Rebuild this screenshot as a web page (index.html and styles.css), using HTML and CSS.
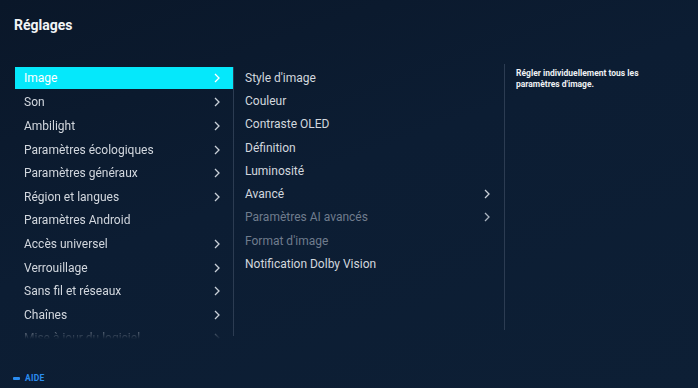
FILE: index.html
```html
<!DOCTYPE html>
<html lang="fr">
<head>
    <meta charset="UTF-8">
    <title>Réglages</title>
    <link rel="stylesheet" href="styles.css">
</head>
<body>

<div class="screen">
    <h1 class="title">Réglages</h1>

    <div class="panels">
        <ul class="menu main-menu">
            <li class="item active"><span>Image</span><svg class="chev" viewBox="0 0 6 10"><polyline points="1,1 5,5 1,9"/></svg></li>
            <li class="item"><span>Son</span><svg class="chev" viewBox="0 0 6 10"><polyline points="1,1 5,5 1,9"/></svg></li>
            <li class="item"><span>Ambilight</span><svg class="chev" viewBox="0 0 6 10"><polyline points="1,1 5,5 1,9"/></svg></li>
            <li class="item"><span>Paramètres écologiques</span><svg class="chev" viewBox="0 0 6 10"><polyline points="1,1 5,5 1,9"/></svg></li>
            <li class="item"><span>Paramètres généraux</span><svg class="chev" viewBox="0 0 6 10"><polyline points="1,1 5,5 1,9"/></svg></li>
            <li class="item"><span>Région et langues</span><svg class="chev" viewBox="0 0 6 10"><polyline points="1,1 5,5 1,9"/></svg></li>
            <li class="item"><span>Paramètres Android</span></li>
            <li class="item"><span>Accès universel</span><svg class="chev" viewBox="0 0 6 10"><polyline points="1,1 5,5 1,9"/></svg></li>
            <li class="item"><span>Verrouillage</span><svg class="chev" viewBox="0 0 6 10"><polyline points="1,1 5,5 1,9"/></svg></li>
            <li class="item"><span>Sans fil et réseaux</span><svg class="chev" viewBox="0 0 6 10"><polyline points="1,1 5,5 1,9"/></svg></li>
            <li class="item"><span>Chaînes</span><svg class="chev" viewBox="0 0 6 10"><polyline points="1,1 5,5 1,9"/></svg></li>
            <li class="item"><span>Mise à jour du logiciel</span><svg class="chev" viewBox="0 0 6 10"><polyline points="1,1 5,5 1,9"/></svg></li>
        </ul>

        <ul class="menu sub-menu">
            <li class="item"><span>Style d'image</span></li>
            <li class="item"><span>Couleur</span></li>
            <li class="item"><span>Contraste OLED</span></li>
            <li class="item"><span>Définition</span></li>
            <li class="item"><span>Luminosité</span></li>
            <li class="item"><span>Avancé</span><svg class="chev" viewBox="0 0 6 10"><polyline points="1,1 5,5 1,9"/></svg></li>
            <li class="item disabled"><span>Paramètres AI avancés</span><svg class="chev" viewBox="0 0 6 10"><polyline points="1,1 5,5 1,9"/></svg></li>
            <li class="item disabled"><span>Format d'image</span></li>
            <li class="item"><span>Notification Dolby Vision</span></li>
        </ul>

        <div class="help-text">
            Régler individuellement tous les paramètres d'image.
        </div>
    </div>

    <div class="footer">
        <span class="key-dash"></span>
        <span class="key-label">AIDE</span>
    </div>
</div>

</body>
</html>
```

FILE: styles.css
```css
body {
    margin: 0;
    background-color: #0c1c31;
    font-family: Roboto, 'Noto Sans', sans-serif;
    color: #d2d7de;
}

.screen {
    width: 698px;
    height: 388px;
    overflow: hidden;
    background: linear-gradient(160deg, #0a1729 0%, #0c1d33 45%, #0d1f35 100%);
    display: flex;
    flex-direction: column;
}

.title {
    margin: 0;
    padding: 16px 14px 0;
    font-size: 14px;
    line-height: 18px;
    font-weight: 700;
    color: #f2f4f6;
}

.panels {
    display: flex;
    margin-top: 33px;
    height: 272px;
}

.menu {
    list-style: none;
    margin: 0;
    padding: 0;
}

.item {
    height: 23.6px;
    display: flex;
    align-items: center;
    justify-content: space-between;
    font-size: 12px;
}

.chev {
    width: 6px;
    height: 10px;
    fill: none;
    stroke: #c9d0d8;
    stroke-width: 1.3;
}

.main-menu {
    width: 218px;
    margin-left: 15px;
    height: 272px;
    overflow: hidden;
    -webkit-mask-image: linear-gradient(to bottom, #000 255px, transparent 272px);
    mask-image: linear-gradient(to bottom, #000 255px, transparent 272px);
}

.main-menu .item {
    padding: 0 13px 0 9px;
}

.main-menu .item.active {
    background-color: #05e8fb;
    color: #ffffff;
    height: 22px;
    margin-bottom: 1.6px;
}

.main-menu .item.active .chev {
    stroke: #ffffff;
}

.sub-menu {
    width: 259px;
    border-left: 1px solid #2c3c52;
    padding-left: 11px;
    padding-top: 0;
    height: 269px;
}

.sub-menu .item {
    height: 23.3px;
    padding-right: 14px;
}

.sub-menu .item:first-child {
    margin-top: -1px;
}

.sub-menu .item.disabled {
    color: #6f7c8d;
}

.sub-menu .item.disabled .chev {
    stroke: #aab4c0;
}

.help-text {
    border-left: 1px solid #2c3c52;
    margin-top: -3px;
    padding: 4px 40px 0 11px;
    width: 132px;
    height: 262px;
    font-size: 8.5px;
    line-height: 11px;
    font-weight: 700;
    color: #eef1f4;
}

.footer {
    margin-top: auto;
    padding: 0 0 5px 13px;
    display: flex;
    align-items: center;
    gap: 5px;
}

.key-dash {
    width: 7px;
    height: 3px;
    background-color: #2a8cf0;
    border-radius: 1px;
}

.key-label {
    font-size: 8.5px;
    font-weight: 700;
    color: #2a8cf0;
    letter-spacing: 0.3px;
}
```
